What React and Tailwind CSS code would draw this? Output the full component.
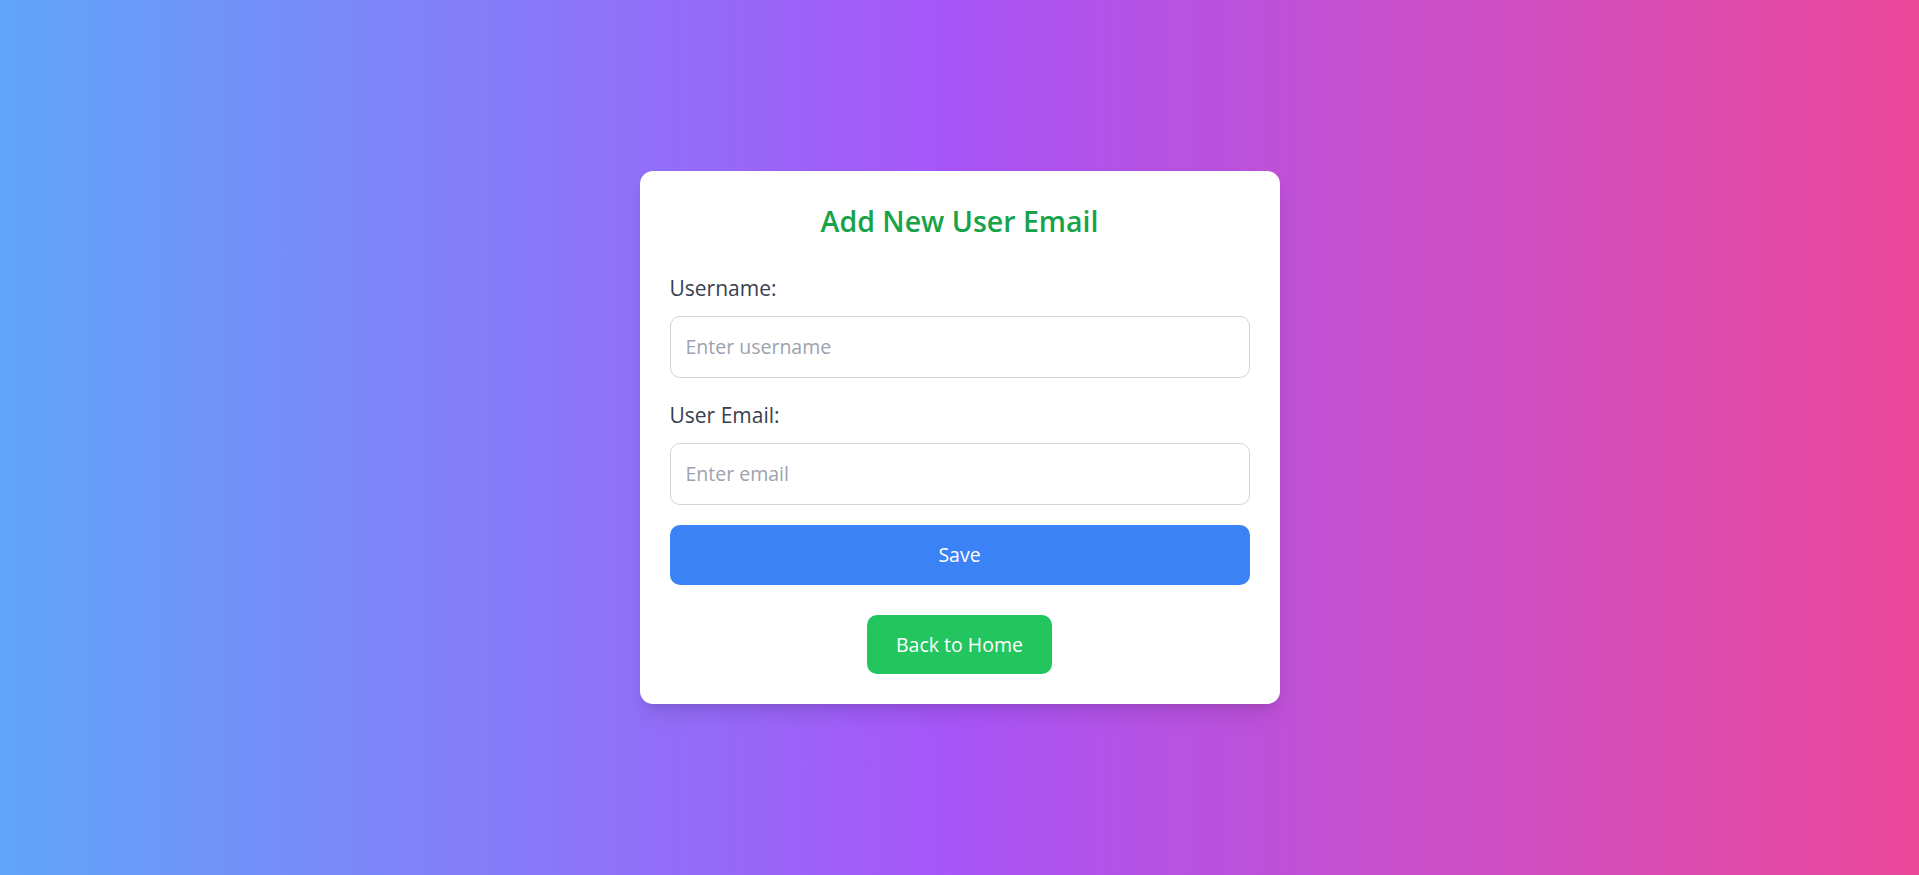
import React, { useState } from 'react';

const AddUserEmail = () => {
  const [username, setUsername] = useState('');
  const [email, setEmail] = useState('');

  // Submit form
  const handleSubmit = (e) => {
    e.preventDefault();
  };

  return (
    <div className="min-h-screen flex items-center justify-center bg-[linear-gradient(to_right,#60a5fa,#a855f7,#ec4899)] font-['Open_Sans',sans-serif]">
      <div className="w-[640px] bg-white rounded-[13px] shadow-[0_12px_20px_-4px_rgba(0,0,0,0.12),0_5px_8px_-5px_rgba(0,0,0,0.1)] p-[30px]">
        <h2 className="text-[28.5px] leading-[40px] font-semibold text-[#16a34a] text-center mb-[30px]">
          Add New User Email
        </h2>

        <form onSubmit={handleSubmit}>
          {/* Username */}
          <div className="mb-5">
            <label className="block text-[21px] leading-[35px] text-[#374151] mb-[10px]">Username:</label>
            <input
              type="text"
              value={username}
              onChange={(e) => setUsername(e.target.value)}
              placeholder="Enter username"
              className="w-full border border-[#d1d5db] rounded-[10px] px-[15px] py-[15px] text-[19.5px] leading-[30px] placeholder-[#9ca3af] outline-none"
            />
          </div>

          {/* Email */}
          <div className="mb-5">
            <label className="block text-[21px] leading-[35px] text-[#374151] mb-[10px]">User Email:</label>
            <input
              type="email"
              value={email}
              onChange={(e) => setEmail(e.target.value)}
              placeholder="Enter email"
              className="w-full border border-[#d1d5db] rounded-[10px] px-[15px] py-[15px] text-[19.5px] leading-[30px] placeholder-[#9ca3af] outline-none"
            />
          </div>

          <button
            type="submit"
            className="w-full bg-[#3b82f6] text-white rounded-[10px] py-[15px] text-[19.5px] leading-[30px]"
          >
            Save
          </button>
        </form>

        <div className="mt-[30px] text-center">
          <button className="inline-block bg-[#22c55e] text-white rounded-[10px] px-[29px] py-[15px] text-[19.5px] leading-[29px]">
            Back to Home
          </button>
        </div>
      </div>
    </div>
  );
};

export default AddUserEmail;
